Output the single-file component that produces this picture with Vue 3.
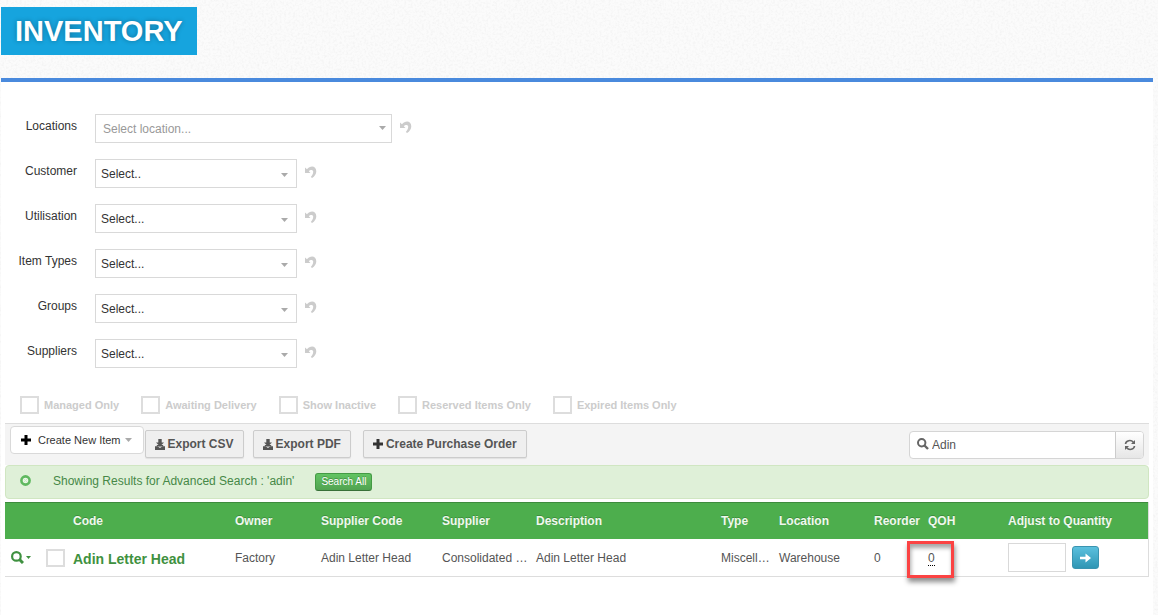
<script setup>
import { ref, reactive } from 'vue'

const filters = reactive([
  { id: 'locations', label: 'Locations', text: 'Select location...', wide: true },
  { id: 'customer', label: 'Customer', text: 'Select..' },
  { id: 'utilisation', label: 'Utilisation', text: 'Select...' },
  { id: 'item-types', label: 'Item Types', text: 'Select...' },
  { id: 'groups', label: 'Groups', text: 'Select...' },
  { id: 'suppliers', label: 'Suppliers', text: 'Select...' },
])
const toggles = ['Managed Only', 'Awaiting Delivery', 'Show Inactive', 'Reserved Items Only', 'Expired Items Only']
const search = ref('Adin')
const quantity = ref('')
</script>

<template>
  <div class="page">
    <svg class="texture" aria-hidden="true">
      <filter id="grain" x="0" y="0" width="100%" height="100%">
        <feTurbulence type="fractalNoise" baseFrequency="0.45" numOctaves="2" seed="4" />
        <feColorMatrix values="0 0 0 0 0.8  0 0 0 0 0.8  0 0 0 0 0.8  0.9 0 0 0 -0.38" />
      </filter>
      <rect width="100%" height="100%" filter="url(#grain)" />
    </svg>

    <header class="heading"><h1>INVENTORY</h1></header>

    <main class="panel">
      <form class="filters" @submit.prevent>
        <div v-for="f in filters" :key="f.id" class="filter">
          <label :for="f.id">{{ f.label }}</label>
          <div class="select" :class="{ wide: f.wide }">
            <select :id="f.id"><option>{{ f.text }}</option></select>
            <svg class="caret" width="7" height="4" viewBox="0 0 7 4"><path d="M0 0h7L3.5 4z" /></svg>
          </div>
          <button type="button" class="undo" :aria-label="'Reset ' + f.label">
            <svg width="12" height="12" viewBox="0 0 12 12">
              <path d="M0 1.500v5.500h5.500L3.800 5.300C5 3.600 8 3.200 8.200 5.600c.1 2-1 3.800-2.400 5.300l1.300 1.100c2.500-1.600 4.200-4 4.200-6.800C11.300-.2 5.300-1 2 3.300z" />
            </svg>
          </button>
        </div>
      </form>

      <div class="toggles">
        <label v-for="t in toggles" :key="t"><input type="checkbox" class="box" />{{ t }}</label>
      </div>

      <div class="toolbar">
        <button type="button" class="new-item">
          <svg width="10" height="10" viewBox="0 0 10 10"><path d="M3.500 0h3v3.500H10v3H6.500V10h-3V6.500H0v-3h3.500z" /></svg>
          Create New Item
          <svg class="caret" width="7" height="4" viewBox="0 0 7 4"><path d="M0 0h7L3.500 4z" /></svg>
        </button>
        <div class="actions">
          <button v-for="kind in ['CSV', 'PDF']" :key="kind" type="button" class="action">
            <svg width="10" height="11" viewBox="0 0 10 11"><path d="M3.300 0h3.400v3.500H9L5 7.500 1 3.500h2.300zM0 7.300h2.500L5 9l2.500-1.700H10V11H0z" /><path d="M1.800 6h6.400v1.500H1.800z" /></svg>
            Export {{ kind }}
          </button>
          <button type="button" class="action order">
            <svg width="10" height="10" viewBox="0 0 10 10"><path d="M3.500 0h3v3.500H10v3H6.500V10h-3V6.500H0v-3h3.500z" /></svg>
            Create Purchase Order
          </button>
        </div>
        <div class="search">
          <svg width="12" height="12" viewBox="0 0 12 12">
            <circle cx="4.700" cy="4.700" r="3.700" fill="none" stroke="#666" stroke-width="2" />
            <path d="M7.500 7.500 11 11" stroke="#666" stroke-width="2.400" />
          </svg>
          <input v-model="search" type="text" aria-label="Search items" />
          <button type="button" aria-label="Refresh">
            <svg width="12" height="12" viewBox="0 0 12 12" fill="none" stroke="#666" stroke-width="1.600">
              <path d="M1.500 5C1.900 1.400 7 .4 9.300 3.200M10.500 7C10.100 10.600 5 11.600 2.700 8.800" />
              <path d="M11 1v4H7zM1 11V7H5z" fill="#666" stroke="none" />
            </svg>
          </button>
        </div>
      </div>

      <div class="notice" role="status">
        <button type="button" class="clear" aria-label="Clear search">
          <svg width="11" height="11" viewBox="0 0 11 11">
            <circle cx="5.500" cy="5.500" r="4.100" fill="#eaf6e6" stroke="#5fb85f" stroke-width="2.600" />
            <path d="m4 4 3 3M7 4 4 7" stroke="#cdeac8" stroke-width="1" />
          </svg>
        </button>
        <span>Showing Results for Advanced Search : 'adin'</span>
        <button type="button" class="all">Search All</button>
      </div>

      <table>
        <colgroup>
          <col class="c-view" /><col class="c-pick" /><col class="c-code" /><col class="c-owner" />
          <col class="c-supcode" /><col class="c-supplier" /><col /><col class="c-type" />
          <col class="c-location" /><col class="c-reorder" /><col class="c-qoh" /><col class="c-adjust" />
        </colgroup>
        <thead>
          <tr>
            <th></th><th></th><th>Code</th><th>Owner</th><th>Supplier Code</th><th>Supplier</th>
            <th>Description</th><th>Type</th><th>Location</th><th>Reorder</th><th>QOH</th><th>Adjust to Quantity</th>
          </tr>
        </thead>
        <tbody>
          <tr>
            <td>
              <button type="button" class="view" aria-label="View item">
                <svg width="13" height="13" viewBox="0 0 13 13" fill="none" stroke="#3f9140">
                  <circle cx="5.400" cy="5.400" r="4.300" stroke-width="2.200" />
                  <path d="m8.500 8.500 3.500 3.500" stroke-width="3" />
                </svg>
                <svg width="5" height="3" viewBox="0 0 5 3"><path d="M0 0h5L2.500 3z" fill="#3f9140" /></svg>
              </button>
            </td>
            <td class="pick"><input type="checkbox" class="box" aria-label="Select Adin Letter Head" /></td>
            <td class="name"><a href="#" class="code">Adin Letter Head</a></td>
            <td>Factory</td>
            <td>Adin Letter Head</td>
            <td>Consolidated …</td>
            <td>Adin Letter Head</td>
            <td>Miscell…</td>
            <td>Warehouse</td>
            <td>0</td>
            <td class="qoh"><span class="count">0</span><span class="marker"></span></td>
            <td>
              <div class="adjust">
                <input v-model="quantity" type="text" aria-label="Adjust to Quantity" />
                <button type="button" aria-label="Apply quantity">
                  <svg width="11" height="10" viewBox="0 0 11 10"><path d="M0 3.700h5.500V.5L11 5 5.500 9.500V6.300H0z" fill="#fff" /></svg>
                </button>
              </div>
            </td>
          </tr>
        </tbody>
      </table>
    </main>
  </div>
</template>

<style>
body {
  margin: 0;
  background: #fbfbfb;
}
</style>

<style scoped>
.page {
  position: relative;
  box-sizing: border-box;
  display: flex;
  flex-direction: column;
  min-height: 100vh;
  padding: 7px 5px 0 1px;
  font: 12px/18px "Liberation Sans", Arial, sans-serif;
  color: #333;
}
.page * { box-sizing: border-box; }
.texture {
  position: absolute;
  inset: 0;
  width: 100%;
  height: 100%;
}
.heading {
  position: relative;
  display: flex;
  padding-bottom: 23px;
}
h1 {
  margin: 0;
  padding: 0 14px;
  background: #16a4de;
  color: #fff;
  font-size: 29px;
  line-height: 48px;
  text-shadow: 0 0 5px rgba(0, 0, 0, 0.3);
}
.panel {
  position: relative;
  flex: 1;
  padding: 32px 4px 0;
  background: #fff;
  border-top: 4px solid #4a8add;
}
button, input, select {
  margin: 0;
  font: inherit;
  color: inherit;
}
button {
  padding: 0;
  border: 0;
  background: none;
  cursor: pointer;
}
svg { flex: none; }
.filters {
  display: grid;
  gap: 16px;
}
.filter { display: flex; }
.filter > label {
  width: 72px;
  margin-right: 18px;
  padding-top: 3px;
  text-align: right;
}
.select {
  position: relative;
  width: 202px;
}
.select.wide { width: 297px; }
select {
  display: block;
  width: 100%;
  height: 29px;
  padding: 0 24px 0 5px;
  border: 1px solid #d9d9d9;
  border-radius: 0;
  background: #fff;
  appearance: none;
}
.wide select {
  padding-left: 7px;
  color: #999;
}
.caret { fill: #aaa; }
.select .caret {
  position: absolute;
  right: 6px;
  top: 12px;
}
.select:not(.wide) .caret {
  right: 9px;
  top: 14px;
}
.undo {
  display: flex;
  margin: 7px 0 0 8px;
  height: 12px;
}
.undo svg { fill: #ccc; }
.toggles {
  display: flex;
  gap: 22px;
  padding: 28px 0 9px 15px;
}
.toggles label {
  display: flex;
  align-items: center;
  gap: 5px;
  font-size: 11px;
  font-weight: bold;
  color: #ccc;
}
.box {
  flex: none;
  display: block;
  width: 19px;
  height: 18px;
  border: 2px solid #ddd;
  background: #fff;
  appearance: none;
}
.toolbar {
  display: flex;
  align-items: flex-start;
  height: 42px;
  padding: 2px 5px 0;
  background: #f4f4f4;
  border-top: 1px solid #ddd;
}
.new-item {
  display: flex;
  align-items: center;
  height: 28px;
  padding: 0 11px 0 10px;
  background: #fff;
  border: 1px solid #d9d9d9;
  border-radius: 4px;
  font-size: 11px;
  gap: 7px;
}
.new-item .caret { margin-left: -3px; }
.actions {
  display: flex;
  padding: 4px 0 0 1px;
}
.action {
  display: flex;
  align-items: center;
  gap: 3px;
  height: 28px;
  margin-right: 9px;
  padding: 0 9px;
  background: #efefef;
  border: 1px solid #ccc;
  border-radius: 2px;
  box-shadow: 0 1px 1px rgba(0, 0, 0, 0.08);
  color: #555;
  font-weight: bold;
}
.action svg { fill: #555; }
.action.order { margin-left: 3px; }
.action.order svg { fill: #333; }
.search {
  display: flex;
  align-items: center;
  width: 235px;
  height: 28px;
  margin: 5px 0 0 auto;
  background: #fff;
  border: 1px solid #d5d5d5;
  border-radius: 4px;
}
.search > svg { margin: 0 3px 2px 7px; }
.search input {
  flex: 1;
  min-width: 0;
  padding: 0;
  border: 0;
  color: #555;
  background: none;
}
.search button {
  display: flex;
  align-items: center;
  justify-content: center;
  width: 28px;
  height: 26px;
  border-left: 1px solid #ccc;
  border-radius: 0 3px 3px 0;
  background: linear-gradient(#fff, #e6e6e6);
}
.notice {
  display: flex;
  align-items: flex-start;
  height: 34px;
  margin-bottom: 3px;
  padding: 6px 14px;
  background: #dff0d8;
  border: 1px solid #d0e6c2;
  border-radius: 4px;
  color: #468847;
}
.clear {
  display: flex;
  margin: 3px 22px 0 0;
}
.all {
  height: 18px;
  margin: 1px 0 0 21px;
  padding: 0 5px;
  border: 1px solid #449a44;
  border-bottom-color: #387038;
  border-radius: 3px;
  background: linear-gradient(#62c462, #51a351);
  color: #fff;
  font-size: 10px;
  line-height: 16px;
  text-shadow: 0 -1px 0 rgba(0, 0, 0, 0.25);
}
table {
  width: 100%;
  table-layout: fixed;
  border-spacing: 0;
  border-right: 1px solid #ddd;
}
.c-view { width: 36px; }
.c-pick { width: 27px; }
.c-code { width: 162px; }
.c-owner { width: 86px; }
.c-supcode { width: 121px; }
.c-supplier { width: 94px; }
.c-type { width: 58px; }
.c-location { width: 95px; }
.c-reorder { width: 54px; }
.c-qoh { width: 80px; }
.c-adjust { width: 145px; }
th, td {
  height: 37px;
  padding: 0 0 0 5px;
  text-align: left;
  white-space: nowrap;
}
th {
  background: #4dae4d;
  border-top: 1px solid #3d8b3d;
  color: #f0f8ee;
  text-shadow: 0 -1px 0 rgba(0, 0, 0, 0.2);
}
td {
  height: 38px;
  border-bottom: 1px solid #ddd;
  color: #555;
}
.view {
  display: flex;
  align-items: center;
  gap: 2px;
  padding-left: 1px;
}
.name { padding-top: 3px; }
.code {
  color: #3f9140;
  font-size: 14px;
  font-weight: bold;
  text-decoration: none;
}
.qoh { position: relative; }
.count {
  display: inline-block;
  line-height: 14px;
  border-bottom: 1px dotted #000;
}
.marker {
  position: absolute;
  left: -16px;
  top: 2px;
  width: 47px;
  height: 37px;
  border: 3px solid #fb4343;
  box-shadow: 1px 4px 5px rgba(0, 0, 0, 0.45), inset 1px 4px 4px rgba(0, 0, 0, 0.35);
  pointer-events: none;
}
.adjust {
  display: flex;
  align-items: center;
  gap: 6px;
}
.adjust input {
  width: 58px;
  height: 29px;
  padding: 0 5px;
  border: 1px solid #d9d9d9;
  background: #fff;
}
.adjust button {
  display: flex;
  align-items: center;
  justify-content: center;
  width: 27px;
  height: 23px;
  border: 1px solid #3a94b0;
  border-radius: 3px;
  background: linear-gradient(#5bc0de, #2f96b4);
}
</style>
